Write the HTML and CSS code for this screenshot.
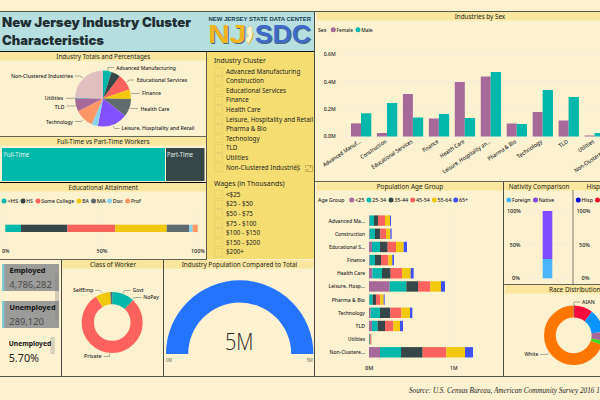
FILE: index.html
```html
<!DOCTYPE html>
<html lang="en">
<head>
<meta charset="utf-8">
<title>New Jersey Industry Cluster Characteristics</title>
<link rel="stylesheet" href="styles.css">
</head>
<body>
<main class="board">
  <div class="left">
    <header class="header">
      <svg id="heading" width="207" height="39" viewBox="0 12 207 39"></svg>
      <svg id="logo" width="107" height="39" viewBox="207 12 107 39"></svg>
    </header>
    <div class="middle">
      <div class="stack">
        <section class="panel"><svg id="pie" width="206" height="84" viewBox="0 52 206 84"></svg></section>
        <section class="panel heavy"><svg id="workers" width="206" height="45" viewBox="0 137 206 45"></svg></section>
        <section class="panel"><svg id="education" width="206" height="76" viewBox="0 183 206 76"></svg></section>
      </div>
      <aside class="slicer">
        <h2 class="first"><span>Industry Cluster</span></h2>
        <ul>
          <li><span>Advanced Manufacturing</span></li>
          <li><span>Construction</span></li>
          <li><span>Educational Services</span></li>
          <li><span>Finance</span></li>
          <li><span>Health Care</span></li>
          <li><span>Leisure, Hospitality and Retail</span></li>
          <li><span>Pharma &amp; Bio</span></li>
          <li><span>Technology</span></li>
          <li><span>TLD</span></li>
          <li><span>Utilities</span></li>
          <li><span>Non-Clustered Industries</span>
            <svg class="tools" width="20" height="10" viewBox="0 0 20 10"><path d="M1 1h5l-2 3v4l-1-1v-3zM11.500 4v-2.500h7v6h-4M11.500 5.500h2.500v2h-2.500zM15 4.500l2-2m-1.500 0h1.500v1.500" fill="none" stroke="#b39a45" stroke-width=".7"/></svg></li>
        </ul>
        <h2><span>Wages (in Thousands)</span></h2>
        <ul>
          <li><span>&lt;$25</span></li>
          <li><span>$25 - $50</span></li>
          <li><span>$50 - $75</span></li>
          <li><span>$75 - $100</span></li>
          <li><span>$100 - $150</span></li>
          <li><span>$150 - $200</span></li>
          <li><span>$200+</span></li>
        </ul>
      </aside>
    </div>
    <div class="bottom">
      <section class="cell"><svg id="cards" width="61" height="116" viewBox="0 260 61 116"></svg></section>
      <section class="cell"><svg id="worker-class" width="101" height="116" viewBox="62 260 101 116"></svg></section>
      <section class="cell"><svg id="gauge" width="150" height="116" viewBox="164 260 150 116"></svg></section>
    </div>
  </div>
  <div class="right">
    <section class="panel"><svg id="sex" width="285" height="169" viewBox="315 12 285 169"></svg></section>
    <div class="lower">
      <section class="cell"><svg id="age" width="188" height="194" viewBox="315 182 188 194"></svg></section>
      <div class="side">
        <section class="panel"><svg id="origin" width="96" height="102" viewBox="504 182 96 102"></svg></section>
        <section><svg id="race" width="96" height="91" viewBox="504 285 96 91"></svg></section>
      </div>
    </div>
  </div>
</main>
<footer>Source: U.S. Census Bureau, American Community Survey 2016 1-Year</footer>
<script src="charts.js"></script>
</body>
</html>
```
FILE: styles.css
```css
* { box-sizing: border-box; }
body { margin: 0; width: 600px; height: 400px; overflow: hidden; background: #fdf2d0; color: #24231e; font-family: "Noto Sans", "Open Sans", sans-serif; }
svg { display: block; }
.board { display: flex; margin-top: 11px; height: 366px; border-top: 1px solid #55564a; border-bottom: 1px solid #55564a; }
.left { width: 315px; flex: none; border-right: 1px solid #4b4c44; }
.right { width: 285px; flex: none; overflow: hidden; }
.header { display: flex; height: 40px; background: #b6e0e0; border-bottom: 1px solid #111; }
.middle { display: flex; height: 208px; }
.stack { width: 207px; flex: none; border-right: 1px solid #5e5c48; }
.panel { border-bottom: 1px solid #65655a; }
.heavy { border-bottom-color: #000; }
.bottom { display: flex; height: 116px; }
.cell { border-right: 1px solid #4b4c44; flex: none; }
.bottom .cell:last-child { border-right: 0; }
.lower { display: flex; height: 194px; }
.side { width: 96px; flex: none; }
.slicer { flex: 1; height: 207px; padding-left: 7px; background: #f5dd71; overflow: hidden; }
.slicer h2 { margin: 0; height: 13px; font-size: 7.8px; line-height: 12px; font-weight: 400; white-space: nowrap; }
.slicer h2.first { margin-top: 2px; height: 12.5px; }
.slicer h2 span { display: inline-block; transform: scaleX(.88); transform-origin: 0 50%; }
.slicer ul { margin: 0 0 4.500px; padding: 0; list-style: none; }
.slicer li { display: flex; align-items: center; height: 9.620px; font-size: 7.100px; line-height: 9.620px; white-space: nowrap; position: relative; }
.slicer li::before { content: ""; width: 7px; height: 7px; margin-right: 3px; flex: none; border: 1px solid #ead36f; }
.slicer li span { transform: scaleX(.885); transform-origin: 0 50%; }
.tools { position: absolute; left: 80px; top: 1px; }
footer { margin-top: 6px; padding-left: 409px; white-space: nowrap; overflow: hidden; font: italic 7.200px/16px "Liberation Serif", serif; }
text { font-family: "Noto Sans", "Open Sans", sans-serif; fill: #24231e; }
.heading { font-family: Inter, sans-serif; font-weight: 900; font-size: 12.800px; fill: #1f3032; }
.title { font-size: 7.300px; }
.label { font-size: 5.700px; font-weight: 500; }
.tiny { font-size: 4.500px; fill: #666; }
.white { font-size: 6.200px; fill: #e4f3e8; }
.kpi { font-size: 7.400px; font-weight: 700; fill: #111; }
.number { font-size: 9.600px; fill: #4b4b4b; }
.percent { font-size: 10.500px; fill: #1c1c1c; }
.big { font-family: "Open Sans", sans-serif; font-weight: 300; font-size: 24px; }
.tagline { font-family: "Liberation Sans", sans-serif; font-weight: 700; font-size: 4.900px; fill: #173c4c; }
.letters { font-family: "Liberation Sans", sans-serif; font-weight: 700; font-size: 25.500px; text-shadow: 1px 1px 0 #4c6a82; }
.gold { fill: #f4b51e; }
.blue { fill: #3f6bc8; }
```
FILE: charts.js
```js
const NS = 'http://www.w3.org/2000/svg';
const C = { teal: '#01b8aa', dark: '#374649', red: '#fd625e', gold: '#f2c80f', gray: '#5f6b6d', sky: '#8ad4eb', orange: '#fe9666', plum: '#a66999', blue: '#4150f5' };

function add(id, tag, attrs, content) {
  const el = document.createElementNS(NS, tag);
  for (const k in attrs) el.setAttribute(k, attrs[k]);
  if (content) el.textContent = content;
  document.getElementById(id).appendChild(el);
}
function text(id, cls, s, x, y, len, extra) {
  add(id, 'text', Object.assign({ class: cls, x, y, textLength: len, lengthAdjust: 'spacingAndGlyphs' }, extra), s);
}
const end = { 'text-anchor': 'end' };
function rect(id, x, y, width, height, fill) { add(id, 'rect', { x, y, width, height, fill }); }
function line(id, d, stroke = '#77766a', w = 0.6) { add(id, 'path', { d, fill: 'none', stroke, 'stroke-width': w }); }
function ring(id, cx, cy, r, w, parts) {
  let a = 0;
  for (const [to, color] of parts) {
    add(id, 'circle', { cx, cy, r, fill: 'none', stroke: color, 'stroke-width': w, pathLength: 360, 'stroke-dasharray': `${to - a} 360`, 'stroke-dashoffset': -a, transform: `rotate(-90 ${cx} ${cy})` });
    a = to;
  }
}
function title(id, s, x, len, y, left, width) {
  rect(id, left, y, width, 8.5, '#fae69f');
  text(id, 'title', s, x, y + 7.3, len);
}
function legend(id, y, items) {
  for (const [x, color, s, len] of items) {
    add(id, 'circle', { cx: x, cy: y, r: 2.5, fill: color });
    text(id, 'label', s, x + 3.2, y + 2.1, len);
  }
}

// Header
text('heading', 'heading', 'New Jersey Industry Cluster', 2, 27.3, 189);
text('heading', 'heading', 'Characteristics', 2, 44.6, 102);
text('logo', 'tagline', 'NEW JERSEY STATE DATA CENTER', 208.5, 20.6, 102.5);
text('logo', 'letters gold', 'NJ', 208.2, 43.4, 38);
text('logo', 'letters blue', 'SDC', 254.8, 43.4, 56);
add('logo', 'path', { d: 'M249.500 26l3 1.500-.5 4 1 3-1.500 5-3 5-1.500-3-1.500-2 3-4-2-3 1-4z', fill: '#fff4d2', stroke: '#d8b867', 'stroke-width': 0.5 });
line('logo', 'M253.500 33l-1.500 6-3 5', '#f0ae22', 1);

// Industry totals
title('pie', 'Industry Totals and Percentages', 56.3, 94, 52, 0, 206);
ring('pie', 103, 98.6, 14, 28, [[18, C.teal], [37, C.dark], [71, C.red], [91, C.gold], [128, C.gray], [191, '#8250ff'], [204, C.sky], [243, C.orange], [270, C.plum], [272, '#3599b8'], [360, '#dfbfbf']]);
text('pie', 'label', 'Advanced Manufacturing', 116.3, 69.7, 59.5);
text('pie', 'label', 'Educational Services', 136.7, 82.2, 50.5);
text('pie', 'label', 'Finance', 142, 95.3, 19);
text('pie', 'label', 'Health Care', 140.5, 111.3, 29);
text('pie', 'label', 'Leisure, Hospitality and Retail', 121.5, 130.3, 73);
text('pie', 'label', 'Non-Clustered Industries', 11, 78.2, 62);
text('pie', 'label', 'Utilities', 44.7, 100.3, 18.5);
text('pie', 'label', 'TLD', 54.5, 108.7, 10);
text('pie', 'label', 'Technology', 46, 123.7, 27);
line('pie', 'M108 71v-3.500h6M127 82l2-2h5M131 93.500h9M130 108.500h8M113 126l1.500 2.500h5M83 78l-3-2h-5M75 98.300h-9M75.500 106h-9M83 120l-2 1.500h-6');

// Full-time and part-time
title('workers', 'Full-Time vs Part-Time Workers', 57, 92.5, 137, 0, 206);
rect('workers', 2, 148, 163, 33, C.teal);
rect('workers', 166, 148, 38.5, 33, C.dark);
text('workers', 'white', 'Full-Time', 3.7, 156.700, 25.5);
text('workers', 'white', 'Part-Time', 167, 156.700, 26);

// Education
title('education', 'Educational Attainment', 68.5, 69.5, 183, 0, 206);
legend('education', 201, [[4, C.teal, '<HS', 11], [23, C.dark, 'HS', 6.5], [38, C.red, 'Some College', 33], [79, C.gold, 'BA', 6.5], [93.500, C.gray, 'MA', 9], [109.500, C.sky, 'Doc', 10], [127.700, C.orange, 'Prof', 10]]);
[5.3, 101.5, 197.5].forEach(x => line('education', `M${x} 211v36`, '#eeeadb'));
let ex = 5.3;
[[21, C.teal], [67.500, C.dark], [115.300, C.red], [166.700, C.gold], [189, C.gray], [192.700, C.sky], [197.700, C.orange]].forEach(([to, c]) => { rect('education', ex, 224.700, to - ex, 7.300, c); ex = to; });
text('education', 'label', '0%', 2, 252.5, 7.5);
text('education', 'label', '50%', 96.5, 252.5, 11);
text('education', 'label', '100%', 191, 252.5, 14);

// Employment cards
[[264, 27], [301, 27]].forEach(([y, h]) => { rect('cards', 2, y, 57, h, '#9b9b99'); rect('cards', 2, y, 2.2, h, '#82cbd9'); });
rect('cards', 55, 273, 4, 47, 'rgba(130,130,130,.35)');
rect('cards', 50.5, 337, 4.3, 17, '#d8d0ba');
text('cards', 'kpi', 'Employed', 9.5, 273.2, 36);
text('cards', 'number', '4,786,282', 9.3, 288, 42.5);
text('cards', 'kpi', 'Unemployed', 9.5, 309.7, 46);
text('cards', 'number', '289,120', 9.3, 325, 34.5);
text('cards', 'kpi', 'Unemployed', 8.7, 345.6, 42.5);
text('cards', 'percent', '5.70%', 8.7, 362.3, 30.3);

// Class of worker
title('worker-class', 'Class of Worker', 90, 46, 260, 62, 101);
ring('worker-class', 112.2, 322.5, 24.4, 12.2, [[43, C.teal], [328, C.red], [356, C.gold], [360, C.gray]]);
text('worker-class', 'label', 'SelfEmp', 73, 292.2, 20.5);
text('worker-class', 'label', 'Govt', 132.7, 292.2, 11);
text('worker-class', 'label', 'NoPay', 143.3, 299, 15.5);
text('worker-class', 'label', 'Private', 84, 358.2, 17.5);
line('worker-class', 'M95 290.300h5l2 2.500M123 293.500l1.500-3h6M132.500 299l2-1.500h7M103.500 356.500h6v-3');

// Gauge
title('gauge', 'Industry Population Compared to Total', 181.7, 115.5, 260, 164, 150);
add('gauge', 'path', { d: 'M166 354a73.700 73.700 0 0 1 147.400 0h-22.200a51.500 51.500 0 0 0-103 0z', fill: '#2574ff' });
text('gauge', 'big', '5M', 225, 349.5, 28.5);
text('gauge', 'tiny', '0M', 166, 361.8, 6);
text('gauge', 'tiny', '5M', 306.8, 361.8, 6);

// Industries by sex
title('sex', 'Industries by Sex', 454.7, 50.5, 12, 317, 283);
text('sex', 'label', 'Sex', 318, 31.9, 8.5);
legend('sex', 29.8, [[333.300, C.plum, 'Female', 16.5], [358, C.teal, 'Male', 11.5]]);
[['0.6M', 54.3], ['0.4M', 81.7], ['0.2M', 109], ['0.0M', 136.3]].forEach(([s, y]) => {
  line('sex', `M340 ${y}h260`, '#efeade');
  text('sex', 'label', s, 323.7, y + 1.9, 12);
});
[['Advanced Manuf…', 123.4, 113.3, 44], ['Construction', 133, 103, 30], ['Educational Services', 94, 117.5, 48], ['Finance', 118.5, 114, 18], ['Health Care', 82, 118, 28], ['Leisure, Hospitality an…', 76.5, 72, 56], ['Pharma & Bio', 123.5, 124, 33], ['Technology', 112, 90, 29], ['TLD', 120.5, 97, 10], ['Utilities', 135.5, 133, 18], ['Non-Clustered Indus…', 100, 100, 54]].forEach(([s, f, m, len], i) => {
  const x = 351 + i * 25.95;
  rect('sex', x, f, 10, 136.5 - f, C.plum);
  rect('sex', x + 10, m, 10.3, 136.5 - m, C.teal);
  text('sex', 'label', s, 0, 0, len, { 'text-anchor': 'end', transform: `translate(${x + 10} 142.500) rotate(-34)` });
});

// Population age group; segment edges are thirds of a pixel from x = 310
title('age', 'Population Age Group', 376.7, 66.5, 182, 317, 186);
text('age', 'label', 'Age Group', 318, 202.1, 26.5);
legend('age', 200, [[351.700, C.plum, '<25', 9.5], [369, C.teal, '25-34', 14], [391, C.dark, '35-44', 14], [412.700, C.red, '45-54', 14], [434.300, C.gold, '55-64', 14], [455.700, C.blue, '65+', 9]]);
[369, 453.5].forEach(x => line('age', `M${x} 213v147`, '#efeade'));
const ages = [C.plum, C.teal, C.dark, C.red, C.gold, C.blue];
[['Advanced Ma…', 36.5, 179, 192, 204, 225, 240, 243], ['Construction', 30, 179, 195, 211, 228, 241, 245], ['Educational S…', 36, 186, 210, 233, 258, 281, 291], ['Finance', 18, 179, 195, 213, 235, 247, 252], ['Health Care', 28, 187, 216, 242, 276, 302, 311], ['Leisure, Hosp…', 36.5, 239, 289, 324, 361, 393, 405], ['Pharma & Bio', 33.3, 178, 188, 198, 211, 221, 224], ['Technology', 27, 182, 210, 241, 274, 300, 307], ['TLD', 9.5, 186, 203, 225, 250, 270, 279], ['Utilities', 17, 178, 179, 181, 183, 184, 184.5], ['Non-Clustere…', 35.5, 210, 273, 338, 409, 465, 489]].forEach(([s, len, ...edges], i) => {
  const y = 220.6 + i * 13.17;
  text('age', 'label', s, 365, y + 2, len, end);
  let a = 177;
  edges.forEach((b, j) => { rect('age', 310 + (a / 3), y - 5.200, (b - a) / 3, 10.400, ages[j]); a = b; });
});
text('age', 'label', '0M', 365, 370.3, 8.3);
text('age', 'label', '1M', 450, 370.3, 7.5);

// Nativity and Hispanic comparison
title('origin', 'Nativity Comparison', 508.7, 60.8, 182, 504, 96);
text('origin', 'title', 'Hispanic', 586.5, 189.3, 26);
legend('origin', 200, [[508.800, '#4ab5f8', 'Foreign', 18.5], [535.500, '#7f4be0', 'Native', 15.5], [578.300, '#0808e8', 'Hisp', 11.5], [597.500, '#e8102c', 'Non', 10]]);
[['100%', 211, 14, 507], ['50%', 244.7, 11, 509.5], ['0%', 278.3, 8, 512]].forEach(([s, y, len, x]) => {
  line('origin', `M525 ${y}h45`, '#efeade');
  text('origin', 'label', s, x, y + 1.9, len);
  text('origin', 'label', s, x + 69.5, y + 1.9, len);
});
rect('origin', 542.7, 211, 9.6, 48, '#7f4bff');
rect('origin', 542.7, 259, 9.6, 19.3, '#4ab5f8');
line('origin', 'M573 190v94', '#8f8c7d', 1.2);

// Race
title('race', 'Race Distribution', 549, 51.5, 285, 505, 95);
ring('race', 573.7, 335.3, 23.8, 11.8, [[38, '#fb0a3c'], [83, '#0a94ff'], [101, C.plum], [109, '#40dd1e'], [360, '#ff7700']]);
text('race', 'label', 'AIAN', 582, 304.2, 12.7);
text('race', 'label', 'White', 524.5, 356.2, 13.7);
line('race', 'M574 317v-15h6.500M540 354.500h6l2.500-1');
```
